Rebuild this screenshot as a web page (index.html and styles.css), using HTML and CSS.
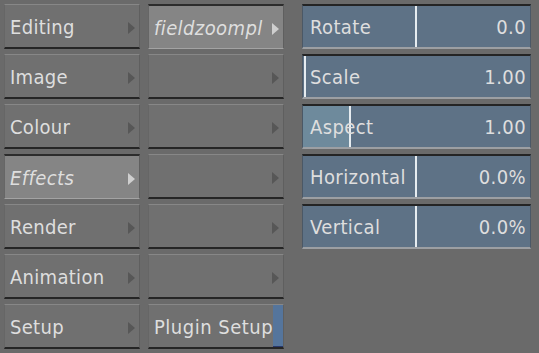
FILE: index.html
```html
<!DOCTYPE html>
<html>
<head>
<meta charset="utf-8">
<link rel="stylesheet" href="styles.css">
</head>
<body>
<div class="app">
  <div class="col">
    <div class="btn"><span>Editing</span><i class="arr"></i></div>
    <div class="btn"><span>Image</span><i class="arr"></i></div>
    <div class="btn"><span>Colour</span><i class="arr"></i></div>
    <div class="btn sel"><span class="it">Effects</span><i class="arr"></i></div>
    <div class="btn"><span>Render</span><i class="arr"></i></div>
    <div class="btn"><span>Animation</span><i class="arr"></i></div>
    <div class="btn"><span>Setup</span><i class="arr"></i></div>
  </div>
  <div class="col">
    <div class="btn sel"><span class="it">fieldzoompl</span><i class="arr"></i></div>
    <div class="btn"><span></span><i class="arr"></i></div>
    <div class="btn"><span></span><i class="arr"></i></div>
    <div class="btn"><span></span><i class="arr"></i></div>
    <div class="btn"><span></span><i class="arr"></i></div>
    <div class="btn"><span></span><i class="arr"></i></div>
    <div class="btn plug"><span>Plugin Setup</span><i class="strip"></i></div>
  </div>
  <div class="panel">
    <div class="field"><i class="mark" style="left:112px"></i><span class="lbl">Rotate</span><span class="val">0.0</span></div>
    <div class="field"><i class="mark" style="left:1px"></i><span class="lbl">Scale</span><span class="val">1.00</span></div>
    <div class="field"><i class="fill" style="width:46px"></i><i class="mark" style="left:46px"></i><span class="lbl">Aspect</span><span class="val">1.00</span></div>
    <div class="field"><i class="mark" style="left:112px"></i><span class="lbl">Horizontal</span><span class="val">0.0%</span></div>
    <div class="field"><i class="mark" style="left:112px"></i><span class="lbl">Vertical</span><span class="val">0.0%</span></div>
  </div>
</div>
</body>
</html>
```
FILE: styles.css
```css
html, body {
  margin: 0;
  padding: 0;
  background: #6a6a6a;
  width: 539px;
  height: 353px;
  overflow: hidden;
}
.app {
  display: flex;
  padding: 4px 0 0 4px;
  font-family: "DejaVu Sans Condensed", "DejaVu Sans", sans-serif;
  font-stretch: condensed;
  font-size: 20px;
  color: #dedede;
}
.col {
  display: flex;
  flex-direction: column;
  gap: 5px;
  width: 136px;
  margin-right: 8px;
}
.col + .col {
  margin-right: 18px;
}
.btn {
  position: relative;
  height: 42px;
  box-sizing: content-box;
  background: #707070;
  border-top: 1px solid #878787;
  border-bottom: 2px solid #252525;
  border-left: 1px solid #666;
  border-right: 1px solid #5f5f5f;
  display: flex;
  align-items: center;
  justify-content: space-between;
  padding: 0 4px 0 5px;
  letter-spacing: 0.3px;
}
.btn span {
  padding-top: 1px;
  white-space: nowrap;
}
.btn.sel {
  background: #858585;
  border-top: 2px solid #2c2c2c;
  border-bottom: 1px solid #a3a3a3;
}
.it {
  font-style: italic;
  letter-spacing: 0.4px;
}
.arr {
  width: 0;
  height: 0;
  border-top: 6px solid transparent;
  border-bottom: 6px solid transparent;
  border-left: 7px solid #575757;
  margin-top: 4px;
}
.sel .arr {
  border-left-color: #cfcfcf;
}
.plug {
  padding-right: 0;
}
.plug span {
  letter-spacing: 0.5px;
}
.strip {
  align-self: stretch;
  width: 11px;
  background: #55759c;
  border-bottom: 1px solid #28386a;
}
.panel {
  display: flex;
  flex-direction: column;
  gap: 5px;
  width: 229px;
}
.field {
  position: relative;
  height: 41px;
  box-sizing: content-box;
  background: #5e7286;
  border-top: 2px solid #242424;
  border-bottom: 2px solid #9c9fa3;
  border-left: 1px solid #4b5866;
  border-right: 1px solid #4b5866;
  display: flex;
  align-items: center;
  justify-content: space-between;
  padding: 0 4px 0 7px;
  letter-spacing: 0.4px;
}
.field span {
  position: relative;
  padding-top: 1px;
}
.mark {
  position: absolute;
  top: 0;
  bottom: 0;
  width: 2px;
  background: #e6ecf0;
}
.fill {
  position: absolute;
  top: 0;
  bottom: 0;
  left: 0;
  background: #6e8a9c;
}
```
